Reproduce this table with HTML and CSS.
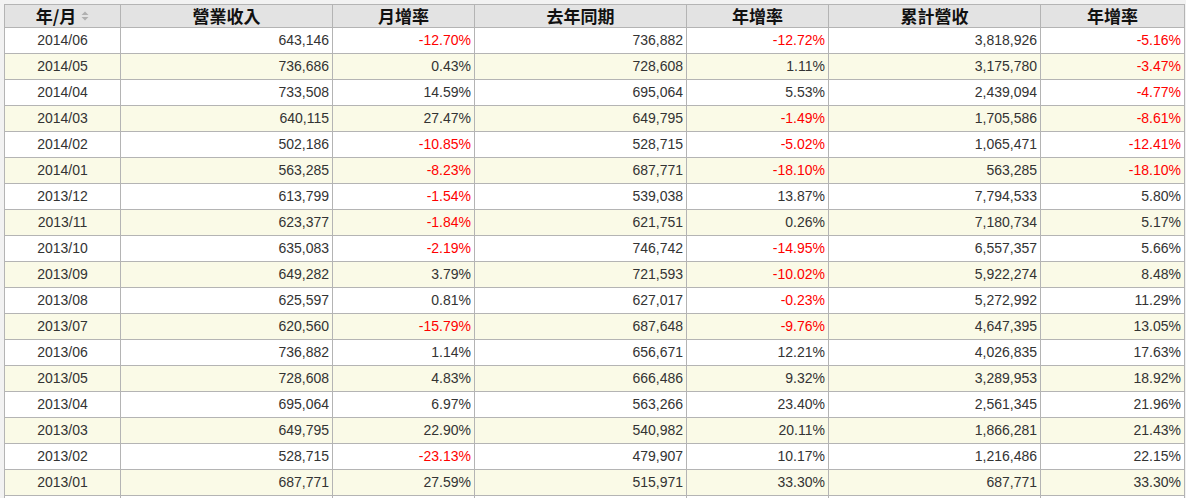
FILE: index.html
```html
<!DOCTYPE html>
<html lang="zh-Hant">
<head>
<meta charset="utf-8">
<title>營收</title>
<link rel="stylesheet" href="styles.css">
</head>
<body>
<table class="rev">
  <colgroup>
    <col class="c1"><col class="c2"><col class="c3"><col class="c4"><col class="c5"><col class="c6"><col class="c7">
  </colgroup>
  <thead>
    <tr>
      <th><span class="ym">年/月<svg class="sort" width="8" height="10" viewBox="0 0 8 10"><path d="M4 0.5 L7.5 4 L0.5 4 Z" fill="#b0b0b0"/><path d="M0.5 6 L7.5 6 L4 9.5 Z" fill="#b0b0b0"/></svg></span></th>
      <th>營業收入</th>
      <th>月增率</th>
      <th>去年同期</th>
      <th>年增率</th>
      <th>累計營收</th>
      <th>年增率</th>
    </tr>
  </thead>
  <tbody>
    <tr><td>2014/06</td><td>643,146</td><td class="neg">-12.70%</td><td>736,882</td><td class="neg">-12.72%</td><td>3,818,926</td><td class="neg">-5.16%</td></tr>
    <tr class="alt"><td>2014/05</td><td>736,686</td><td>0.43%</td><td>728,608</td><td>1.11%</td><td>3,175,780</td><td class="neg">-3.47%</td></tr>
    <tr><td>2014/04</td><td>733,508</td><td>14.59%</td><td>695,064</td><td>5.53%</td><td>2,439,094</td><td class="neg">-4.77%</td></tr>
    <tr class="alt"><td>2014/03</td><td>640,115</td><td>27.47%</td><td>649,795</td><td class="neg">-1.49%</td><td>1,705,586</td><td class="neg">-8.61%</td></tr>
    <tr><td>2014/02</td><td>502,186</td><td class="neg">-10.85%</td><td>528,715</td><td class="neg">-5.02%</td><td>1,065,471</td><td class="neg">-12.41%</td></tr>
    <tr class="alt"><td>2014/01</td><td>563,285</td><td class="neg">-8.23%</td><td>687,771</td><td class="neg">-18.10%</td><td>563,285</td><td class="neg">-18.10%</td></tr>
    <tr><td>2013/12</td><td>613,799</td><td class="neg">-1.54%</td><td>539,038</td><td>13.87%</td><td>7,794,533</td><td>5.80%</td></tr>
    <tr class="alt"><td>2013/11</td><td>623,377</td><td class="neg">-1.84%</td><td>621,751</td><td>0.26%</td><td>7,180,734</td><td>5.17%</td></tr>
    <tr><td>2013/10</td><td>635,083</td><td class="neg">-2.19%</td><td>746,742</td><td class="neg">-14.95%</td><td>6,557,357</td><td>5.66%</td></tr>
    <tr class="alt"><td>2013/09</td><td>649,282</td><td>3.79%</td><td>721,593</td><td class="neg">-10.02%</td><td>5,922,274</td><td>8.48%</td></tr>
    <tr><td>2013/08</td><td>625,597</td><td>0.81%</td><td>627,017</td><td class="neg">-0.23%</td><td>5,272,992</td><td>11.29%</td></tr>
    <tr class="alt"><td>2013/07</td><td>620,560</td><td class="neg">-15.79%</td><td>687,648</td><td class="neg">-9.76%</td><td>4,647,395</td><td>13.05%</td></tr>
    <tr><td>2013/06</td><td>736,882</td><td>1.14%</td><td>656,671</td><td>12.21%</td><td>4,026,835</td><td>17.63%</td></tr>
    <tr class="alt"><td>2013/05</td><td>728,608</td><td>4.83%</td><td>666,486</td><td>9.32%</td><td>3,289,953</td><td>18.92%</td></tr>
    <tr><td>2013/04</td><td>695,064</td><td>6.97%</td><td>563,266</td><td>23.40%</td><td>2,561,345</td><td>21.96%</td></tr>
    <tr class="alt"><td>2013/03</td><td>649,795</td><td>22.90%</td><td>540,982</td><td>20.11%</td><td>1,866,281</td><td>21.43%</td></tr>
    <tr><td>2013/02</td><td>528,715</td><td class="neg">-23.13%</td><td>479,907</td><td>10.17%</td><td>1,216,486</td><td>22.15%</td></tr>
    <tr class="alt"><td>2013/01</td><td>687,771</td><td>27.59%</td><td>515,971</td><td>33.30%</td><td>687,771</td><td>33.30%</td></tr>
    <tr><td>&nbsp;</td><td></td><td></td><td></td><td></td><td></td><td></td></tr>
  </tbody>
</table>
</body>
</html>
```
FILE: styles.css
```css
html, body {
  margin: 0;
  padding: 0;
  background: #f2f2f2;
  overflow: hidden;
}
body {
  padding: 4px 0 0 4px;
}
.rev {
  border-collapse: collapse;
  table-layout: fixed;
  width: 1180px;
  background: #ffffff;
  font-family: "Liberation Sans", Arial, sans-serif;
  font-size: 14px;
  color: #333333;
}
.c1 { width: 116px; }
.c2 { width: 212px; }
.c3 { width: 142px; }
.c4 { width: 212px; }
.c5 { width: 142px; }
.c6 { width: 212px; }
.c7 { width: 144px; }
.rev th {
  height: 22px;
  padding: 0;
  background: #e3e3e3;
  border: 1px solid #b4b4b4;
  font-family: "Noto Sans CJK TC", "Noto Sans CJK SC", sans-serif;
  font-weight: bold;
  font-size: 17px;
  line-height: 22px;
  color: #111111;
  text-align: center;
}
.ym {
  display: inline-flex;
  align-items: center;
  gap: 5px;
}
.sort { display: block; }
.rev td {
  height: 25px;
  padding: 0 3px 0 3px;
  border: 1px solid #b4b4b4;
  text-align: right;
  line-height: 25px;
  white-space: nowrap;
}
.rev td:first-child {
  text-align: center;
  padding: 0;
}
.rev tr.alt td { background: #fafae7; }
.rev td.neg { color: #ff0000; }
```
